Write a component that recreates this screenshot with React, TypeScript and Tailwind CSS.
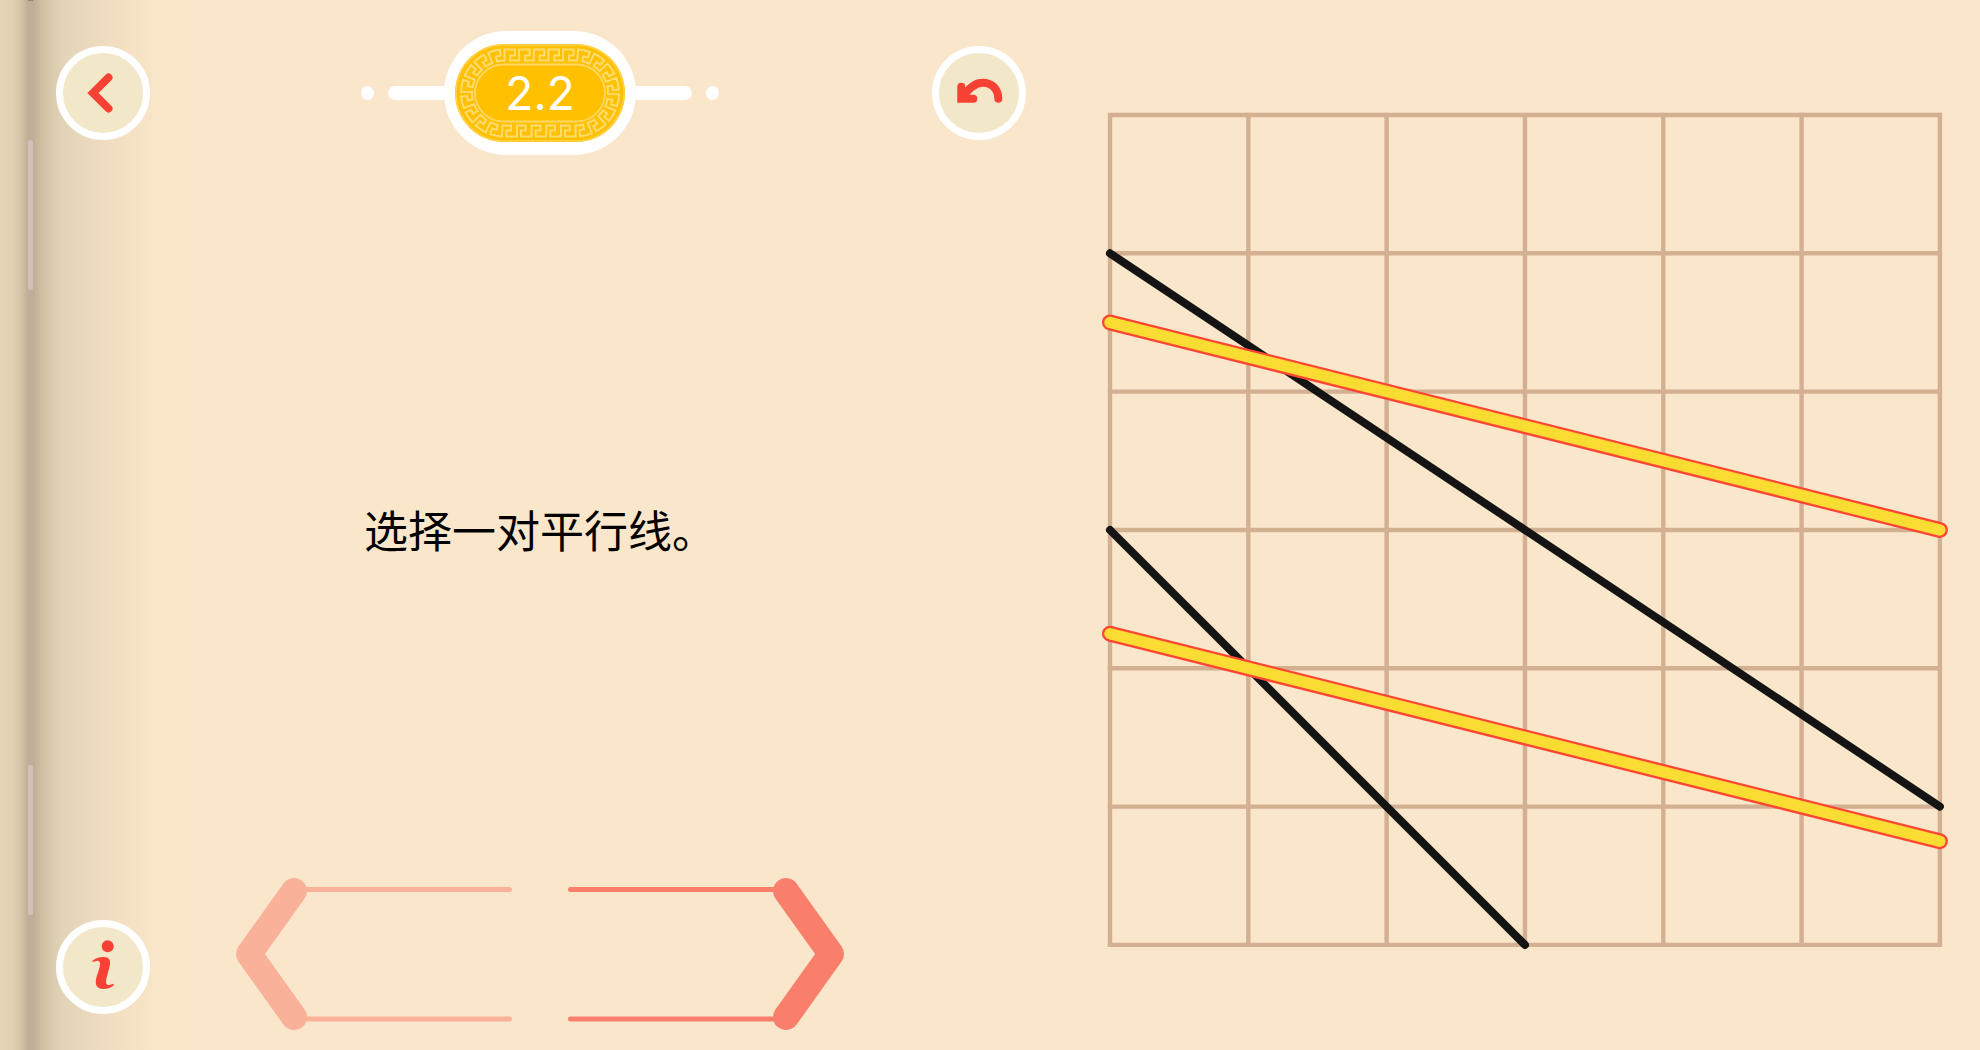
import React from "react";

const UNITS = 26;
const STRAIGHT = 71;
const MID_RADIUS = 38;
const CX = 85;
const CY = 49;

// Maps a distance along the badge's ring and a height across it to a point.
function ringPoint(s: number, t: number): string {
  const arc = Math.PI * MID_RADIUS;
  const total = 2 * (STRAIGHT + arc);
  const d = ((s % total) + total) % total;
  const r = MID_RADIUS + t;
  const half = STRAIGHT / 2;
  let x: number;
  let y: number;
  if (d < STRAIGHT) {
    x = CX - half + d;
    y = CY - r;
  } else if (d < STRAIGHT + arc) {
    const a = (d - STRAIGHT) / MID_RADIUS;
    x = CX + half + r * Math.sin(a);
    y = CY - r * Math.cos(a);
  } else if (d < 2 * STRAIGHT + arc) {
    x = CX + half - (d - STRAIGHT - arc);
    y = CY + r;
  } else {
    const a = (d - 2 * STRAIGHT - arc) / MID_RADIUS;
    x = CX - half - r * Math.sin(a);
    y = CY + r * Math.cos(a);
  }
  return `${x.toFixed(2)},${y.toFixed(2)}`;
}

function keyPattern(): string {
  const pitch = (2 * (STRAIGHT + Math.PI * MID_RADIUS)) / UNITS;
  const shape = [
    [0, -5.5],
    [0, 5.5],
    [0.36, 5.5],
    [0.72, 5.5],
    [0.72, -0.5],
    [0.4, -0.5],
    [0.4, -5.5],
    [0.7, -5.5],
  ];
  const points: string[] = [];
  for (let i = 0; i < UNITS; i++) {
    for (const [u, t] of shape) points.push(ringPoint((i + u) * pitch, t));
  }
  return points.join(" ");
}

function LevelBadge() {
  return (
    <header className="flex items-center justify-center">
      <span className="h-[14px] w-[13px] rounded-full bg-white" />
      <span className="ml-[14px] h-[14px] w-14 rounded-l-full bg-white" />
      <div className="relative flex h-[124px] w-[192px] items-center justify-center rounded-full bg-white">
        <svg className="absolute" width="170" height="98" viewBox="0 0 170 98" aria-hidden="true">
          <rect width="170" height="98" rx="49" fill="#ffc000" />
          <rect x="1" y="1" width="168" height="96" rx="48" fill="none" stroke="#ffd24d" strokeWidth="1.6" />
          <rect x="20" y="20.5" width="130" height="57" rx="28.5" fill="none" stroke="#ffd762" strokeWidth="1.8" />
          <polygon points={keyPattern()} fill="none" stroke="#ffdb70" strokeWidth="2" />
        </svg>
        <h1 className="relative font-['Inter'] text-[46px] leading-none font-normal text-white">2.2</h1>
      </div>
      <span className="h-[14px] w-14 rounded-r-full bg-white" />
      <span className="ml-[14px] h-[14px] w-[13px] rounded-full bg-white" />
    </header>
  );
}

function RoundButton({ label, children }: { label: string; children: React.ReactNode }) {
  return (
    <button
      type="button"
      aria-label={label}
      className="flex size-[94px] shrink-0 cursor-pointer items-center justify-center rounded-full border-[7px] border-white bg-[#f2e7c9]"
    >
      <svg width="80" height="80" viewBox="0 0 80 80" aria-hidden="true">
        {children}
      </svg>
    </button>
  );
}

function PageArrow({ label, next }: { label: string; next?: boolean }) {
  return (
    <button
      type="button"
      aria-label={label}
      className={next ? "cursor-pointer -scale-x-100 text-[#f97f6c]" : "cursor-pointer text-[#f9b199]"}
    >
      <svg width="276" height="152" viewBox="0 0 276 152" fill="none" stroke="currentColor" strokeLinecap="round" strokeLinejoin="round" aria-hidden="true">
        <path d="M58 11.5H273.5M58 141H273.5" strokeWidth="5" />
        <path d="M58 13L13 76L58 139" strokeWidth="26" />
      </svg>
    </button>
  );
}

const GRID = [0, 1, 2, 3, 4, 5, 6];
const BLACK_LINES = [
  [0, 1, 6, 5],
  [0, 3, 3, 6],
];
const PICKED_LINES = [
  [0, 1.5, 6, 3],
  [0, 3.75, 6, 5.25],
];

function Board() {
  const cell = 830 / 6;
  return (
    <svg className="block aspect-square w-full overflow-visible" viewBox="0 0 830 830" strokeLinecap="round" role="img" aria-label="6 × 6">
      <g stroke="#d4b092" strokeWidth="4.4" strokeLinecap="square">
        {GRID.map((i) => (
          <path key={i} d={`M0 ${i * cell}H830M${i * cell} 0V830`} />
        ))}
      </g>
      {BLACK_LINES.map(([x1, y1, x2, y2]) => (
        <line key={y1} x1={x1 * cell} y1={y1 * cell} x2={x2 * cell} y2={y2 * cell} stroke="#141414" strokeWidth="8" />
      ))}
      {PICKED_LINES.map(([x1, y1, x2, y2]) => (
        <g key={y1} className="cursor-pointer">
          <line x1={x1 * cell} y1={y1 * cell} x2={x2 * cell} y2={y2 * cell} stroke="#ff4632" strokeWidth="16" />
          <line x1={x1 * cell} y1={y1 * cell} x2={x2 * cell} y2={y2 * cell} stroke="#fadc32" strokeWidth="11.4" />
        </g>
      ))}
    </svg>
  );
}

export default function App() {
  return (
    <main className="flex min-h-screen bg-[#fae6ca] bg-[linear-gradient(90deg,#e6d6b9_0px,#e2d2b4_12px,#d6c6a9_20px,#c8b89c_25px,#bfae98_28px,#bfae98_34px,#c5b598_36px,#d1c1a4_43px,#dbcbae_51px,#e3d4b7_64px,#e9d8bc_84px,#f0ddc1_108px,#f5e2c5_132px,#f9e5c8_156px,#fae6ca_200px)]">
      <div className="flex w-9 shrink-0 flex-col items-end justify-between pr-[3px]" aria-hidden="true">
        <span className="h-px w-[5px] bg-[#94866f]" />
        <span className="mt-[139px] h-[150px] w-[5px] rounded-sm bg-[#d4c0bb]" />
        <span className="mt-auto mb-[135px] h-[150px] w-[5px] rounded-sm bg-[#d4c0bb]" />
      </div>

      <nav className="ml-5 flex flex-col justify-between pt-[46px] pb-9">
        <RoundButton label="返回">
          <path d="M45.5 24.5L30 40L45.5 55.5" fill="none" stroke="#f74134" strokeWidth="8" strokeLinecap="round" strokeLinejoin="miter" />
        </RoundButton>
        <RoundButton label="提示">
          <g fill="#f74134">
            <circle cx="44.7" cy="19.3" r="6" />
            <path d="M29.6 33.5C33 30.8 37 29.8 41 29.9C45.5 30 47.6 32.5 47 37C46.2 43 43.5 49 43 54.5C42.8 57.2 44 58.3 46.5 57.9L50.3 56.8C51 57.3 50.8 58.3 50 58.9C47.2 61 43.8 62 40.2 61.9C35.2 61.8 32.4 59 32.8 54.2C33.3 48 37 42.2 37 37C37 34.2 35.6 33.6 33.6 33.9L30.2 34.8C29.3 34.9 29 34.1 29.6 33.5Z" />
          </g>
        </RoundButton>
      </nav>

      <section className="flex w-[39.5%] flex-col items-center pt-[31px] pr-[2px] pb-[20px]">
        <LevelBadge />
        <div className="flex flex-1 items-center pt-6">
          <p className="font-['Noto_Sans_CJK_SC',sans-serif] text-[44px] leading-[64px] font-normal text-black">选择一对平行线。</p>
        </div>
        <div className="flex gap-14">
          <PageArrow label="上一页" />
          <PageArrow label="下一页" next />
        </div>
      </section>

      <div className="pt-[46px]">
        <RoundButton label="撤销">
          <g fill="none" stroke="#f74134" strokeWidth="8" strokeLinecap="round">
            <path d="M59.3 45.7C59.3 36 53 29.7 43.5 29.7C36 29.7 30.5 35 24 43" />
            <path d="M22.3 33.7V45.7H34.3" strokeLinejoin="miter" />
            <path d="M22 36L32 46H22Z" fill="#f74134" stroke="none" />
          </g>
        </RoundButton>
      </div>

      <section className="flex flex-1 items-center pt-[10px] pr-10 pl-[84px]">
        <Board />
      </section>
    </main>
  );
}
